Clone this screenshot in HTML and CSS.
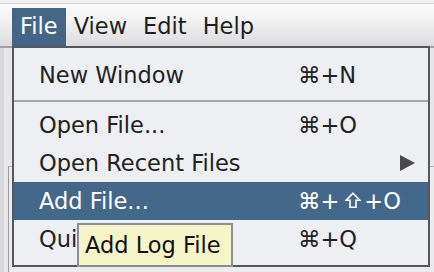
FILE: index.html
```html
<!DOCTYPE html>
<html>
<head>
<meta charset="utf-8">
<link rel="stylesheet" href="styles.css">
</head>
<body>
<div class="app">
  <div class="topstrip"></div>
  <div class="menubar">
    <div class="mb-item active">File</div>
    <div class="mb-item">View</div>
    <div class="mb-item">Edit</div>
    <div class="mb-item">Help</div>
  </div>
  <div class="workspace">
    <div class="panel"></div>
  </div>
  <div class="popup">
    <div class="row"><span class="label">New Window</span><span class="key">⌘+N</span></div>
    <div class="sep"></div>
    <div class="row"><span class="label">Open File...</span><span class="key">⌘+O</span></div>
    <div class="row"><span class="label">Open Recent Files</span><span class="arrow"><svg width="15" height="16" viewBox="0 0 15 16"><polygon points="0,0 15,8 0,16" fill="#4a4a4a"/></svg></span></div>
    <div class="row hl"><span class="label">Add File...</span><span class="key">⌘+<svg class="shift" width="16" height="16" viewBox="0 0 16 16"><path d="M8 1.2 L14.8 8.2 H11 V15.2 H5 V8.2 H1.2 Z" fill="none" stroke="#ffffff" stroke-width="1.6" stroke-linejoin="miter"/></svg>+O</span></div>
    <div class="row"><span class="label">Quit</span><span class="key">⌘+Q</span></div>
  </div>
  <div class="tooltip">Add Log File</div>
</div>
</body>
</html>
```

FILE: styles.css
```css
html, body {
  margin: 0;
  padding: 0;
}
body {
  width: 434px;
  height: 272px;
  overflow: hidden;
  font-family: "DejaVu Sans", "Liberation Sans", sans-serif;
  font-size: 22.5px;
  color: #1e1e1e;
  background: #e6e6e8;
}
.app {
  position: relative;
  width: 434px;
  height: 272px;
  display: flex;
  flex-direction: column;
}
.topstrip {
  height: 3px;
  background: #f1f1f1;
  border-bottom: 1px solid #d6d6d6;
}
.menubar {
  height: 38px;
  padding-top: 4px;
  display: flex;
  padding-left: 12px;
  background: linear-gradient(#fbfbfb, #f2f2f3 40%, #dcdce0);
  border-bottom: 2px solid #a2a2a4;
}
.mb-item {
  height: 38px;
  line-height: 37px;
  padding: 0 8px;
}
.mb-item.active {
  background: #436687;
  color: #ffffff;
}
.workspace {
  flex: 1;
  display: flex;
  padding: 118px 0 0 8px;
  background: linear-gradient(90deg, #d9d9db 0, #d9d9db 4px, #e7e7e9 4px);
}
.panel {
  flex: 1;
  border-left: 1px solid #9a9a9c;
  border-top: 1px solid #b0b0b2;
  background: #ececee;
}
.popup {
  position: absolute;
  left: 12px;
  top: 46px;
  width: 414px;
  height: 202px;
  border: 2px solid #575757;
  background: #eeeff3;
  padding: 8px 0 7px 0;
}
.row {
  display: grid;
  grid-template-columns: 259px 1fr;
  height: 38px;
  line-height: 38px;
  padding: 0 13px 0 25px;
  color: #222222;
}
.row.hl {
  background: #44688a;
  color: #ffffff;
}
.key {
  white-space: nowrap;
  display: flex;
  align-items: center;
}
.shift {
  display: block;
  flex: 0 0 16px;
  margin: -2px 3px 0 6px;
}
.arrow {
  display: flex;
  justify-content: flex-end;
  align-items: center;
}
.arrow svg {
  display: block;
}
.sep {
  height: 2px;
  background: #a4a8ad;
  margin: 6px 0 4px 0;
}
.tooltip {
  position: absolute;
  left: 77px;
  top: 223px;
  width: 146px;
  height: 40px;
  border: 2px solid #8f8f8f;
  background: #f6f4c9;
  color: #111111;
  line-height: 40px;
  padding-left: 6px;
}
```
